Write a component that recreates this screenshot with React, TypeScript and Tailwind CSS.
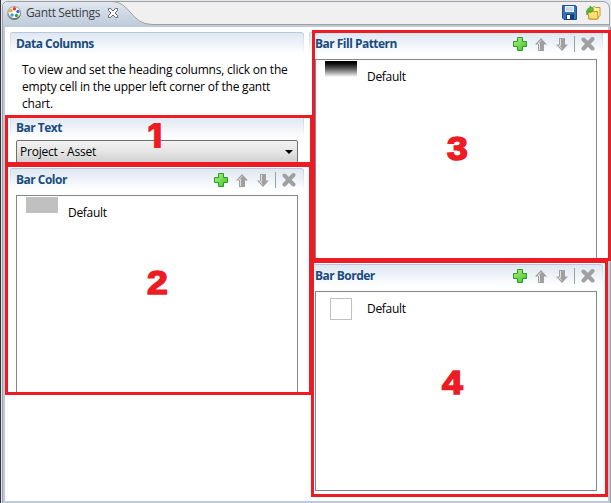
import React from "react";

const uiFont = "font-['Open_Sans','Noto_Sans',sans-serif]";

function Plus() {
  return (
    <svg width="14" height="14" viewBox="0 0 14 14">
      <defs>
        <linearGradient id="plus" x1="0" y1="0" x2="1" y2="1">
          <stop offset="0" stopColor="#b5f08a" />
          <stop offset="1" stopColor="#3fc41f" />
        </linearGradient>
      </defs>
      <path d="M4.500 .500h5v4h4v5h-4v4h-5v-4h-4v-5h4z" fill="url(#plus)" stroke="#2c9a26" strokeLinejoin="round" />
    </svg>
  );
}

function Arrow({ down = false }: { down?: boolean }) {
  return (
    <svg width="12" height="13" viewBox="0 0 12 13">
      {down ? (
        <>
          <path d="M3 0H9V6.500H12L6 13L0 6.500H3z" fill="#a0a0a0" />
          <path d="M4.500 1V7.500H3L5.500 10.500" fill="none" stroke="#e2e2e2" />
        </>
      ) : (
        <>
          <path d="M6 0L12 6.500H9V13H3V6.500H0z" fill="#a0a0a0" />
          <path d="M4.500 12V5.500H3L6 2.300" fill="none" stroke="#e2e2e2" />
        </>
      )}
    </svg>
  );
}

function Cross() {
  return (
    <svg width="14" height="14" viewBox="0 0 14 14">
      <path d="M2.500 2.500L11.500 11.500M11.500 2L2.500 11.500" stroke="#a0a0a0" strokeWidth="4" strokeLinecap="round" />
    </svg>
  );
}

function Tools() {
  return (
    <div className="flex h-[18px] w-[82px] shrink-0 items-center">
      <Plus />
      <span className="ml-[8px] flex"><Arrow /></span>
      <span className="ml-[9px] flex"><Arrow down /></span>
      <span className="ml-[6px] h-4 w-px bg-[#a0a0a0]" />
      <span className="ml-[6px] flex"><Cross /></span>
    </div>
  );
}

function Header({ title, tools = false }: { title: string; tools?: boolean }) {
  return (
    <div className="relative flex h-[22px] w-[294px] shrink-0 justify-between rounded-t-[3px] border-t border-[#b4c8de] bg-linear-to-b from-[#dfe7f1] to-white pl-[6px]">
      <span className="absolute inset-y-0 left-0 w-px bg-linear-to-b from-[#c3d2e4] to-white" />
      <span className="absolute inset-y-0 right-0 w-px bg-linear-to-b from-[#c3d2e4] to-white" />
      <h2 className="pt-[3px] text-[12px] leading-4 font-bold tracking-[-0.52px] text-[#194c7f]">{title}</h2>
      {tools && <div className="pt-[2px] pr-[8px]"><Tools /></div>}
    </div>
  );
}

function ListBox({ className, children }: { className: string; children: React.ReactNode }) {
  return <div className={`ml-[6px] flex w-[282px] shrink-0 items-start border border-[#828790] bg-white ${className}`}>{children}</div>;
}

function Label() {
  return <span className="text-[12px] leading-4 tracking-[-0.3px]">Default</span>;
}

function TitleBar() {
  return (
    <div className="relative h-[27px] w-full shrink-0">
      <svg className="absolute inset-0" width="611" height="27" viewBox="0 0 611 27">
        <defs>
          <linearGradient id="tab" x1="0" y1="0" x2="0" y2="1">
            <stop offset="0" stopColor="#e0e7ef" />
            <stop offset="1" stopColor="#bccad9" />
          </linearGradient>
        </defs>
        <rect width="611" height="27" fill="#e3e7ee" />
        <path d="M2.500 27V7Q2.500 1.500 8 1.500H603Q609.500 2 609.500 9V27" fill="#f0f0f0" stroke="#a0a0a0" />
        <path d="M3 25V7Q3 2 8 2H112C130 2 131 24.500 152 24.500H609V27H3z" fill="url(#tab)" />
        <path d="M8 1.500H112C130 1.500 131 24.500 152 24.500H609" fill="none" stroke="#a0a0a0" />
        <rect width="1" height="27" fill="#343442" />
      </svg>
      <div className="relative flex h-[25px] items-center pl-[6px]">
        <svg width="16" height="16" viewBox="0 0 16 16">
          <defs>
            <linearGradient id="palette" x1="0" y1="0" x2="1" y2="1">
              <stop offset="0" stopColor="#c8c8c8" />
              <stop offset="1" stopColor="#505050" />
            </linearGradient>
          </defs>
          <circle cx="8" cy="8" r="7" fill="url(#palette)" />
          <ellipse cx="8.500" cy="7.500" rx="5.800" ry="5.500" fill="#fafafa" />
          <circle cx="8.500" cy="3.800" r="1.700" fill="#ef3b20" />
          <circle cx="4.800" cy="5.800" r="1.700" fill="#f5a32b" />
          <circle cx="12" cy="6.500" r="1.700" fill="#2c6fd0" />
          <circle cx="6" cy="10" r="1.700" fill="#3c9de0" />
          <circle cx="10.500" cy="10.500" r="1.700" fill="#30a83b" />
        </svg>
        <span className="ml-[4px] text-[12px] leading-4 tracking-[-0.35px] text-[#3c3c46]">Gantt Settings</span>
        <svg className="ml-[7px]" width="12" height="12" viewBox="0 0 12 12">
          <path d="M1.500 1.500h2L6 4l2.500-2.500h2v2L8 6l2.500 2.500v2h-2L6 8l-2.500 2.500h-2v-2L4 6 1.500 3.500z" fill="white" stroke="#62666d" />
        </svg>
        <div className="mr-[10px] ml-auto flex gap-[9px]">
          <svg width="15" height="15" viewBox="0 0 15 15">
            <path d="M.5.5h13l1 1v13H2L.5 13z" fill="#3971b9" stroke="#234f8c" />
            <rect x="3" y="1" width="9" height="6" fill="#eaf4fc" />
            <path d="M4 3h7M4 5h7" stroke="#a8bed4" />
            <rect x="4" y="9" width="8" height="6" fill="#183e75" />
            <rect x="5" y="10" width="3" height="4" fill="#fff" />
          </svg>
          <svg width="15" height="15" viewBox="0 0 15 15">
            <path d="M5.500 3.500L8 1.500l1.500 1H14v8L11 14H2.500z" fill="#fff3a0" stroke="#c19625" />
            <path d="M2 6.500h9.500L12 14H3z" fill="#ffdf70" stroke="#c19625" />
            <path d="M1 10C0 6 1 3 4 3V1l4 3.500L4 8V6Q2 6 1 10" fill="#63bb38" stroke="#368c22" strokeWidth=".7" />
          </svg>
        </div>
      </div>
    </div>
  );
}

const frames = [
  "left-[5px] top-[115px] w-[308px] h-[50px]",
  "left-[5px] top-[164px] w-[307px] h-[231px]",
  "left-[312px] top-[30px] w-[299px] h-[231px]",
  "left-[311px] top-[260px] w-[297px] h-[237px]",
];

const arial = "font-['Liberation_Sans',sans-serif] text-[34px] font-bold scale-x-110 [-webkit-text-stroke:1.6px_#ed1c24]";
const marks = [
  "left-[147px] top-[115px] font-['Inter',sans-serif] text-[34px] font-black",
  `left-[148px] top-[261px] ${arial}`,
  `left-[448px] top-[127px] ${arial}`,
  `left-[443px] top-[361px] ${arial}`,
];

export default function App() {
  return (
    <div className={`relative flex h-[503px] w-[611px] flex-col overflow-hidden bg-white text-black ${uiFont}`}>
      <TitleBar />
      <div className="flex h-[476px] border-l border-[#343442]">
        <div className="flex w-full border-l border-[#e3e3e8]">
          <div className="flex w-full border-r border-l border-[#a0a0a0]">
            <div className="flex w-full border-r-2 border-b-2 border-l-2 border-[#bccad9] pl-[5px]">
              <div className="flex w-[299px] shrink-0 flex-col pt-[5px]">
                <Header title="Data Columns" />
                <p className="mt-[7px] ml-[12px] h-[55px] text-[12px] leading-[17px] tracking-[-0.21px] whitespace-nowrap">
                  To view and set the heading columns, click on the<br />empty cell in the upper left corner of the gantt<br />chart.
                </p>
                <Header title="Bar Text" />
                <div className="mt-[2px] ml-[6px] flex h-[24px] w-[282px] shrink-0 items-center justify-between rounded-[2px] border border-[#707070] bg-linear-to-b from-[#f2f2f2] from-0% via-[#e6e6e6] via-45% to-[#cfcfcf] pr-[4px] pl-[3px]">
                  <span className="text-[12px] leading-4 tracking-[-0.22px]">Project - Asset</span>
                  <svg width="8" height="4" viewBox="0 0 8 4"><path d="M0 0h8L4 4z" /></svg>
                </div>
                <div className="mt-[4px] flex shrink-0"><Header title="Bar Color" tools /></div>
                <ListBox className="mt-[5px] h-[199px]">
                  <span className="mt-[1px] ml-[9px] h-4 w-8 bg-[#c0c0c0]" />
                  <span className="mt-[9px] ml-[10px] flex"><Label /></span>
                </ListBox>
              </div>
              <div className="flex flex-col pt-[5px]">
                <Header title="Bar Fill Pattern" tools />
                <ListBox className="mt-[5px] h-[201px]">
                  <span className="mt-[1px] ml-[9px] h-4 w-8 bg-linear-to-b from-black to-white" />
                  <span className="mt-[9px] ml-[10px] flex"><Label /></span>
                </ListBox>
                <div className="mt-[4px] flex shrink-0"><Header title="Bar Border" tools /></div>
                <ListBox className="mt-[5px] h-[200px]">
                  <span className="mt-[6px] ml-[14px] h-[22px] w-[22px] border border-[#c0c0c0]" />
                  <span className="mt-[9px] ml-[15px] flex"><Label /></span>
                </ListBox>
              </div>
            </div>
          </div>
        </div>
      </div>
      {frames.map((f) => <div key={f} className={`absolute border-[3px] border-[#ed1c24] ${f}`} />)}
      {marks.map((m, i) => (
        <span key={m} className={`absolute leading-[42px] text-[#ed1c24] ${m}`}>{i + 1}</span>
      ))}
    </div>
  );
}
